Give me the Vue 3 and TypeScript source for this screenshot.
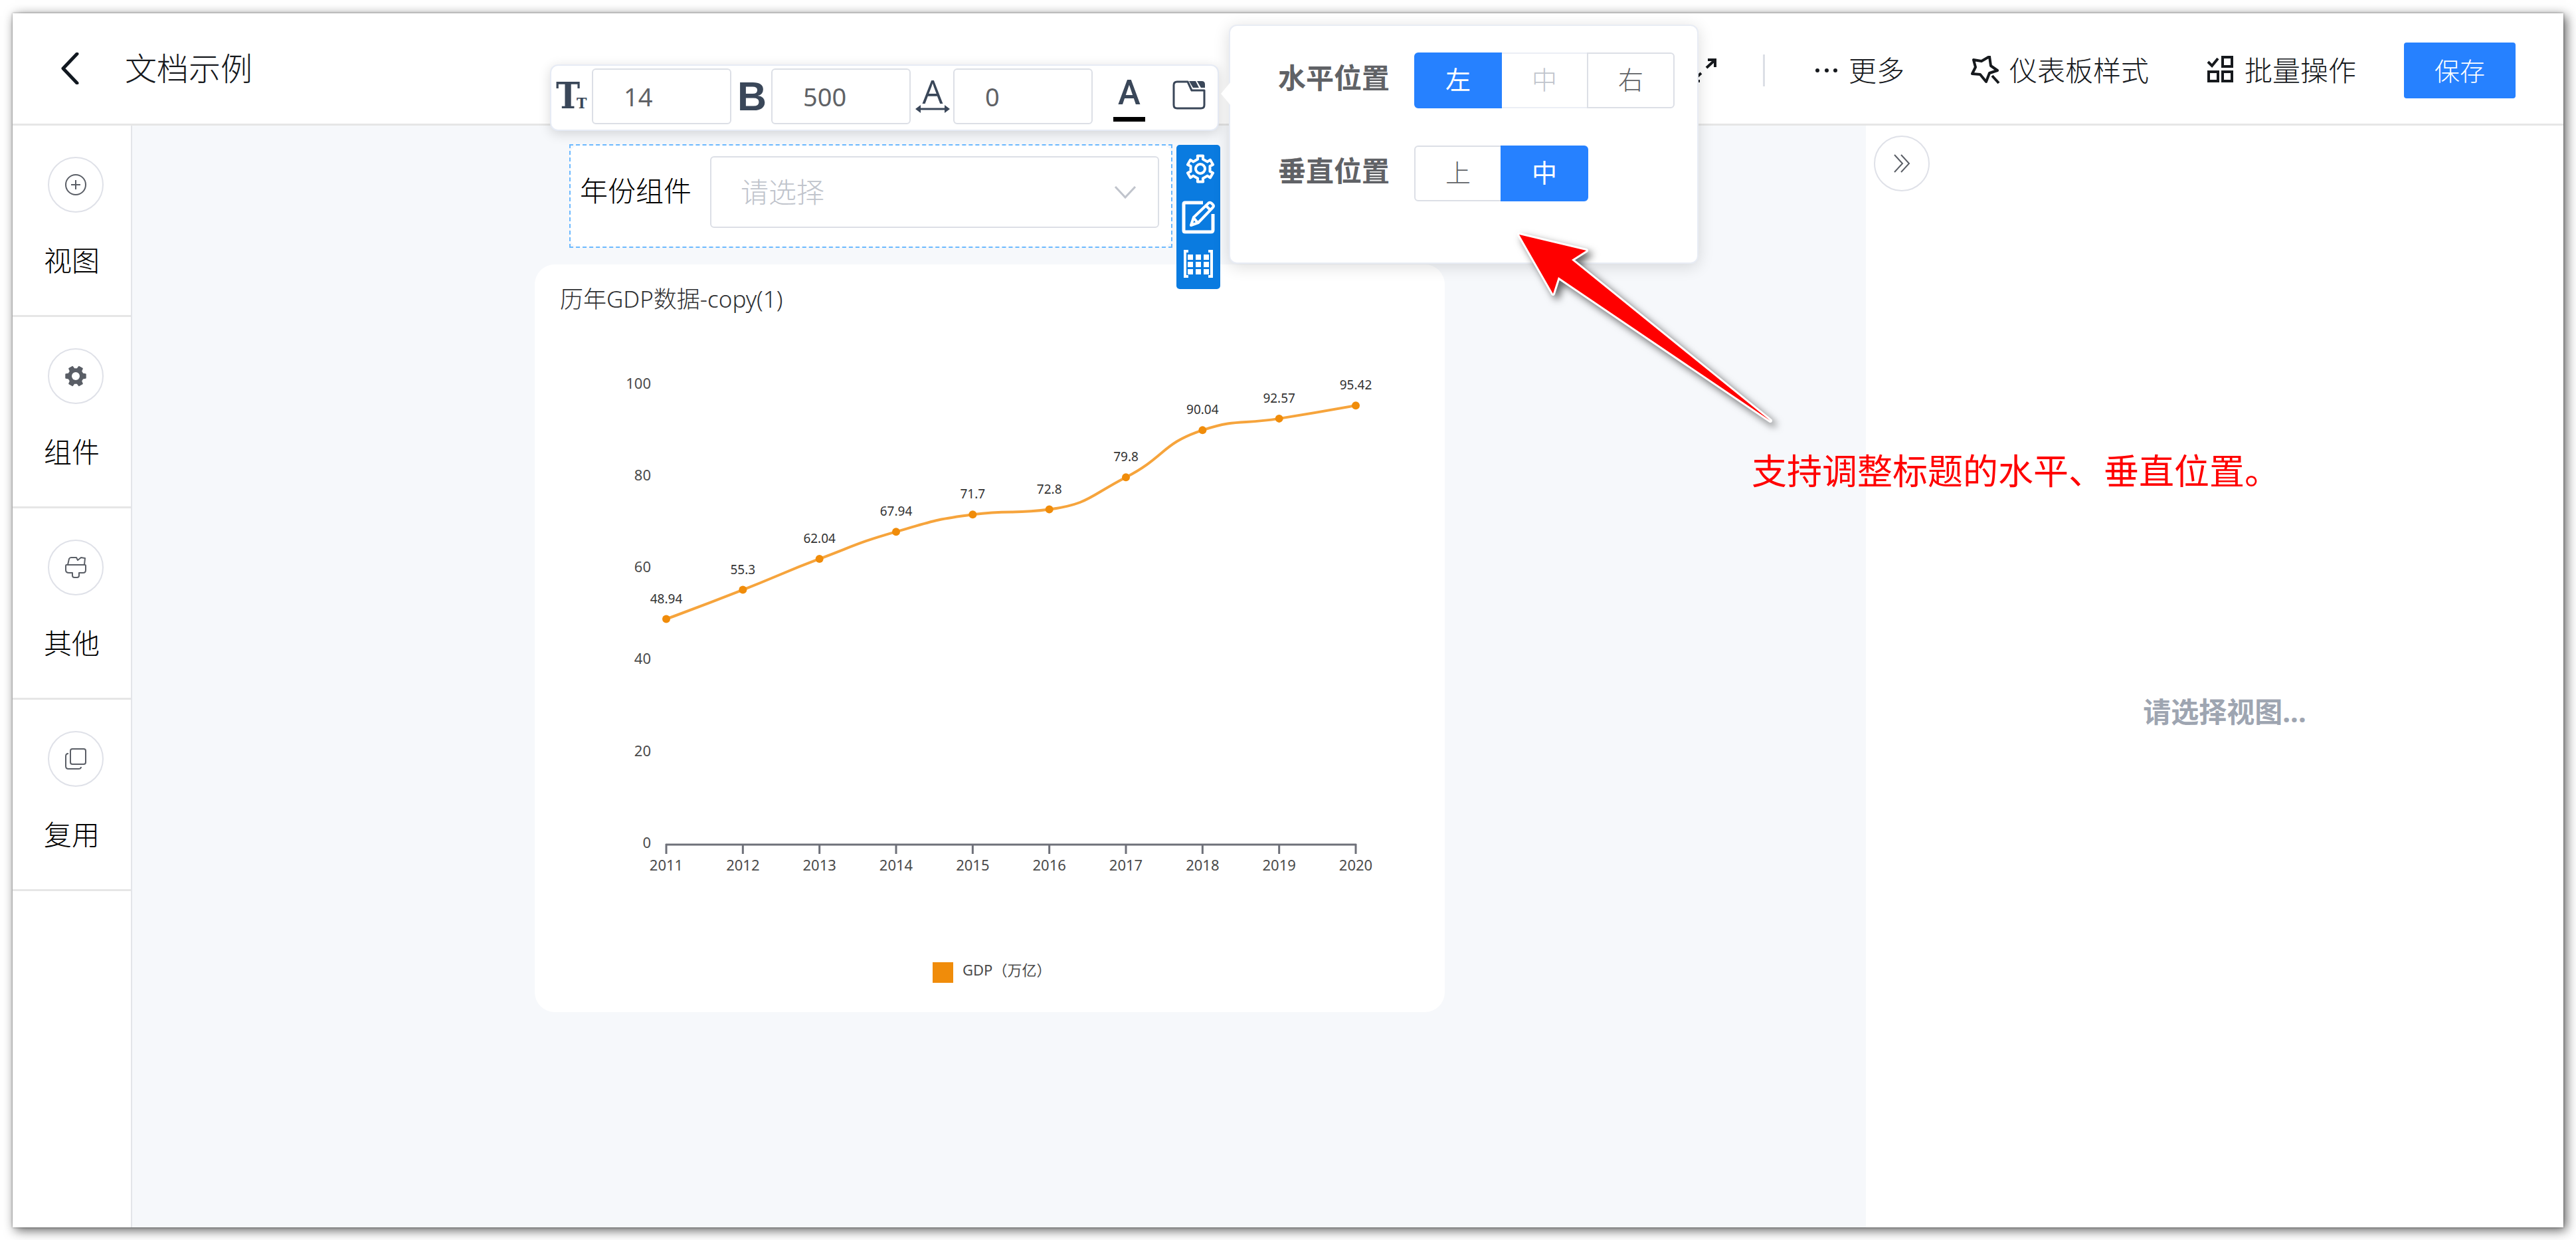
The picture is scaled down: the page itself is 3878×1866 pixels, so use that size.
<script setup lang="ts">
import { computed, ref } from 'vue'

interface Sample { year: number; value: number }
interface NavItem { key: string; label: string }
interface Choice { value: string; label: string; disabled?: boolean }

const navItems: NavItem[] = [
  { key: 'view', label: '视图' },
  { key: 'widget', label: '组件' },
  { key: 'other', label: '其他' },
  { key: 'reuse', label: '复用' },
]

const samples: Sample[] = [
  { year: 2011, value: 48.94 },
  { year: 2012, value: 55.3 },
  { year: 2013, value: 62.04 },
  { year: 2014, value: 67.94 },
  { year: 2015, value: 71.7 },
  { year: 2016, value: 72.8 },
  { year: 2017, value: 79.8 },
  { year: 2018, value: 90.04 },
  { year: 2019, value: 92.57 },
  { year: 2020, value: 95.42 },
]

const horizontalChoices: Choice[] = [
  { value: 'left', label: '左' },
  { value: 'center', label: '中', disabled: true },
  { value: 'right', label: '右' },
]
const verticalChoices: Choice[] = [
  { value: 'top', label: '上' },
  { value: 'center', label: '中' },
]

const fontSize = ref('14')
const fontWeight = ref('500')
const letterSpacing = ref('0')
const horizontal = ref('left')
const vertical = ref('center')
const year = ref('')

const plot = { left: 198, right: 1236, base: 872, unit: 6.915 }
const yTicks = [0, 20, 40, 60, 80, 100]
const yOf = (value: number) => plot.base - value * plot.unit

const points = computed(() =>
  samples.map((s, i) => ({
    ...s,
    x: plot.left + (i * (plot.right - plot.left)) / (samples.length - 1),
    y: yOf(s.value),
  })),
)

const clamp = (v: number, a: number, b: number) => Math.max(Math.min(v, Math.max(a, b)), Math.min(a, b))

// Smooth curve whose control points stay within the neighbouring samples.
const curve = computed(() => {
  const p = points.value
  let d = `M${p[0].x} ${p[0].y}`
  let outX = p[0].x
  let outY = p[0].y
  for (let i = 1; i < p.length; i++) {
    const prev = p[i - 1]
    const cur = p[i]
    const next = p[i + 1]
    let inX = cur.x
    let inY = cur.y
    let nextX = cur.x
    let nextY = cur.y
    if (next) {
      const lenPrev = Math.hypot(cur.x - prev.x, cur.y - prev.y)
      const lenNext = Math.hypot(next.x - cur.x, next.y - cur.y)
      const ratio = lenNext / (lenNext + lenPrev)
      nextX = clamp(cur.x + (next.x - prev.x) * 0.5 * ratio, cur.x, next.x)
      nextY = clamp(cur.y + (next.y - prev.y) * 0.5 * ratio, cur.y, next.y)
      inX = clamp(cur.x - ((nextX - cur.x) * lenPrev) / lenNext, prev.x, cur.x)
      inY = clamp(cur.y - ((nextY - cur.y) * lenPrev) / lenNext, prev.y, cur.y)
      nextX = cur.x + ((cur.x - inX) * lenNext) / lenPrev
      nextY = cur.y + ((cur.y - inY) * lenNext) / lenPrev
    }
    d += `C${outX} ${outY} ${inX} ${inY} ${cur.x} ${cur.y}`
    outX = nextX
    outY = nextY
  }
  return d
})

function gearPath(c: number, outer: number, inner: number, start: number, half: number, foot: number): string {
  const pts: string[] = []
  for (let i = 0; i < 6; i++) {
    const mid = start + i * 60
    const corners: [number, number][] = [[-foot, inner], [-half, outer], [half, outer], [foot, inner]]
    for (const [offset, r] of corners) {
      const a = ((mid + offset) * Math.PI) / 180
      pts.push(`${(c + r * Math.cos(a)).toFixed(2)} ${(c + r * Math.sin(a)).toFixed(2)}`)
    }
  }
  return `M${pts.join('L')}Z`
}
const solidGear = gearPath(16, 15, 11, 0, 11, 18)
const outlineGear = gearPath(24, 20, 15, 30, 12, 15)
</script>

<template>
  <div class="shell">
    <header class="topbar">
      <button class="plain back" type="button" aria-label="返回">
        <svg width="28" height="48" viewBox="0 0 28 48"><path d="M25 2 4 24 25 46" fill="none" stroke="#111820" stroke-width="5" stroke-linecap="round" stroke-linejoin="round" /></svg>
      </button>
      <h1 class="doc-title">文档示例</h1>
      <div class="actions">
        <button class="plain" type="button" aria-label="全屏">
          <svg width="38" height="38" viewBox="0 0 38 38" fill="none" stroke="#16191d" stroke-width="4"><path d="M25 3H36V14M35 4 23 15M13 35H2V24M3 34 15 23" /></svg>
        </button>
        <span class="divider"></span>
        <button class="plain action" type="button">
          <svg width="44" height="44" viewBox="0 0 44 44" fill="#16191d"><circle cx="11" cy="22" r="3" /><circle cx="25" cy="22" r="3" /><circle cx="38" cy="22" r="3" /></svg>
          更多
        </button>
        <button class="plain action style-action" type="button">
          <svg width="44" height="44" viewBox="0 0 44 44" fill="none" stroke="#16191d" stroke-width="4" stroke-linejoin="round"><path d="M4 6 16 8 28 1 30 15 40 22 28 26 23 39 14 28 2 27 7 17Z" /><path d="M32 30 42 41" /></svg>
          仪表板样式
        </button>
        <button class="plain action batch-action" type="button">
          <svg width="44" height="44" viewBox="0 0 44 44" fill="none" stroke="#16191d" stroke-width="4"><path d="M3 9 9 15 18 4" /><rect x="25" y="2" width="14" height="14" /><rect x="4" y="24" width="14" height="14" /><rect x="25" y="24" width="14" height="14" /></svg>
          批量操作
        </button>
        <button class="save" type="button">保存</button>
      </div>
    </header>

    <div class="workspace">
      <nav class="side">
        <button v-for="item in navItems" :key="item.key" class="plain side-item" type="button">
          <span class="ring">
            <svg v-if="item.key === 'view'" width="32" height="32" viewBox="0 0 32 32" fill="none" stroke="#5a5e66" stroke-width="2"><circle cx="16" cy="16" r="15" /><path d="M16 9V23M9 16H23" /></svg>
            <svg v-else-if="item.key === 'widget'" width="32" height="32" viewBox="0 0 32 32"><path :d="solidGear" fill="#5a5e66" stroke="#5a5e66" stroke-width="2" stroke-linejoin="round" /><circle cx="16" cy="16" r="6" fill="#fff" /></svg>
            <svg v-else-if="item.key === 'other'" width="32" height="32" viewBox="0 0 32 32" fill="none" stroke="#5a5e66" stroke-width="2" stroke-linejoin="round"><path d="M4 12 6 3Q7 1 9 1H17L19 5 24 1 30 2 29 12M2 12H30Q31 12 31 14V20Q31 24 27 24H21V28Q21 31 18 31H14Q11 31 11 28V24H6Q1 24 1 20V14Q1 12 2 12Z" /></svg>
            <svg v-else width="32" height="32" viewBox="0 0 32 32" fill="none" stroke="#5a5e66" stroke-width="2"><rect x="8" y="1" width="23" height="23" rx="3" /><path d="M5 8Q1 8 1 12V27Q1 31 5 31H20Q24 31 24 28" /></svg>
          </span>
          <span>{{ item.label }}</span>
        </button>
      </nav>

      <main class="board">
        <section class="filter">
          <div class="filter-body">
            <label for="year-select">年份组件</label>
            <div class="select-wrap">
              <select id="year-select" v-model="year">
                <option value="">请选择</option>
                <option v-for="s in samples" :key="s.year" :value="String(s.year)">{{ s.year }}</option>
              </select>
              <svg class="caret" width="34" height="22" viewBox="0 0 34 22"><path d="M2 2 17 18 32 2" fill="none" stroke="#c0c4cc" stroke-width="3" /></svg>
            </div>
          </div>

          <div class="format-bar">
            <label for="font-size" aria-label="字号">
              <svg width="50" height="64" viewBox="0 -7 50 64" fill="#3a4759"><text class="slab" x="0" y="43" font-size="54">T</text><text class="slab" x="31" y="43" font-size="23">T</text></svg>
            </label>
            <input id="font-size" v-model="fontSize" type="text" />
            <label for="font-weight" aria-label="字重">
              <svg width="50" height="72" viewBox="0 -11 50 72" fill="#3a4759"><text class="grotesk" x="3" y="46" font-size="61" font-weight="700">B</text></svg>
            </label>
            <input id="font-weight" v-model="fontWeight" type="text" />
            <label for="letter-spacing" aria-label="字间距">
              <svg width="54" height="88" viewBox="0 -19 54 88" fill="#3a4759"><text class="humanist" x="27" y="36" font-size="49" text-anchor="middle">A</text><path d="M1 44 9 38V50ZM53 44 45 38V50Z" /><path d="M6 44H48" stroke="#3a4759" stroke-width="3" /></svg>
            </label>
            <input id="letter-spacing" v-model="letterSpacing" type="text" />
            <button class="plain color" type="button" aria-label="字体颜色">
              <svg width="50" height="78" viewBox="0 -12 50 78" fill="#3a4759"><text class="geometric" x="25" y="39" font-size="51" font-weight="500" text-anchor="middle">A</text><rect x="1" y="58" width="48" height="7" fill="#000" /></svg>
            </button>
            <button class="plain place" type="button" aria-label="标题位置">
              <svg width="50" height="48" viewBox="0 0 50 48"><path d="M23 2H7Q2 2 2 7V37Q2 42 7 42H43Q48 42 48 37V15H29Z" fill="none" stroke="#3a4759" stroke-width="3" stroke-linejoin="round" /><path d="M25 1H35L40 11H31ZM37 1H44Q49 1 49 6V11H43Z" fill="#3a4759" /></svg>
            </button>

            <div class="popover">
              <svg class="pointer" width="16" height="36" viewBox="0 0 16 36"><path d="M16 0 1 18 16 36Z" fill="#fff" /></svg>
              <fieldset class="choice-row">
                <legend>水平位置</legend>
                <div class="segments">
                  <label v-for="c in horizontalChoices" :key="c.value" class="segment" :class="{ on: horizontal === c.value, off: c.disabled }">
                    <input v-model="horizontal" type="radio" name="horizontal" :value="c.value" :disabled="c.disabled" />{{ c.label }}
                  </label>
                </div>
              </fieldset>
              <fieldset class="choice-row">
                <legend>垂直位置</legend>
                <div class="segments">
                  <label v-for="c in verticalChoices" :key="c.value" class="segment" :class="{ on: vertical === c.value }">
                    <input v-model="vertical" type="radio" name="vertical" :value="c.value" />{{ c.label }}
                  </label>
                </div>
              </fieldset>
            </div>
          </div>

          <div class="tool-strip">
            <button class="plain" type="button" aria-label="设置">
              <svg width="50" height="48" viewBox="-4 0 50 48" fill="none" stroke="#fff" stroke-width="4" stroke-linejoin="round"><path :d="outlineGear" /><circle cx="24" cy="24" r="7" /></svg>
            </button>
            <button class="plain" type="button" aria-label="编辑">
              <svg width="50" height="50" viewBox="0 0 50 50" fill="none" stroke="#fff"><path d="M32 3H5Q3 3 3 5V45Q3 47 5 47H44Q47 47 47 44V20" stroke-width="5" /><path d="M14 37 18 25 41 3Q43 2 45 4L47 6Q49 8 47 10L25 33ZM37 8 43 14M18 26 24 33" stroke-width="4" stroke-linejoin="round" /></svg>
            </button>
            <button class="plain" type="button" aria-label="网格">
              <svg width="46" height="42" viewBox="0 0 46 42" fill="#fff"><path d="M8 2H3V40H8M38 2H43V40H38" fill="none" stroke="#fff" stroke-width="4" /><path d="M7 7H15V15H7ZM19 7H27V15H19ZM31 7H39V15H31ZM7 18H15V26H7ZM19 18H27V26H19ZM31 18H39V26H31ZM7 29H15V37H7ZM19 29H27V37H19ZM31 29H39V37H31Z" /></svg>
            </button>
          </div>
        </section>

        <section class="chart-card">
          <h2 class="chart-title">历年GDP数据-copy(1)</h2>
          <svg class="chart" viewBox="0 90 1370 1035" role="img" aria-label="历年GDP数据">
            <g class="tick-text">
              <text v-for="t in yTicks" :key="t" x="175" :y="yOf(t) + 6" text-anchor="end">{{ t }}</text>
            </g>
            <g stroke="#6e7079" stroke-width="3">
              <line :x1="plot.left - 1" :x2="plot.right + 1" :y1="plot.base + 1" :y2="plot.base + 1" />
              <line v-for="p in points" :key="p.year" :x1="p.x" :x2="p.x" :y1="plot.base" :y2="plot.base + 15" />
            </g>
            <g class="tick-text">
              <text v-for="p in points" :key="p.year" :x="p.x" :y="plot.base + 40" text-anchor="middle">{{ p.year }}</text>
            </g>
            <path :d="curve" fill="none" stroke="#f6a43c" stroke-width="4" />
            <g fill="#f08c0a">
              <circle v-for="p in points" :key="p.year" :cx="p.x" :cy="p.y" r="6" />
            </g>
            <g class="value-text">
              <text v-for="p in points" :key="p.year" :x="p.x" :y="p.y - 24" text-anchor="middle">{{ p.value }}</text>
            </g>
            <rect x="599" y="1050" width="31" height="31" fill="#f08c0a" />
            <text class="tick-text" x="644" y="1070">GDP（万亿）</text>
          </svg>
        </section>
      </main>

      <aside class="panel">
        <button class="plain ring collapse" type="button" aria-label="收起">
          <svg width="26" height="28" viewBox="0 0 26 28" fill="none" stroke="#5a5e66" stroke-width="2"><path d="M2 1 14 14 2 27M12 1 24 14 12 27" /></svg>
        </button>
        <p class="empty">请选择视图...</p>
      </aside>

      <div class="note">
        <svg width="420" height="320" viewBox="0 0 420 320"><path class="arrow" d="M10 10 111 34 89 48 388 290 69 74 61 99Z" /></svg>
        <p>支持调整标题的水平、垂直位置。</p>
      </div>
    </div>
  </div>
</template>

<style>
body {
  background: #fff;
}
</style>

<style scoped>
.shell,
.shell * {
  box-sizing: border-box;
}
.shell {
  display: flex;
  flex-direction: column;
  min-height: calc(100vh - 39px);
  margin: 20px 19px 19px;
  background: #fff;
  box-shadow: 4px 4px 16px rgba(0, 0, 0, 0.65), 0 0 3px rgba(0, 0, 0, 0.4);
  font-family: "Noto Sans", "Noto Sans CJK SC", sans-serif;
  font-size: 42px;
  line-height: 60px;
  color: #000;
}
.plain {
  padding: 0;
  border: 0;
  background: none;
  font: inherit;
  color: inherit;
}
svg {
  display: block;
}
h1,
h2,
p {
  margin: 0;
}

.topbar {
  display: flex;
  align-items: center;
  height: 169px;
  padding: 0 72px;
  border-bottom: 3px solid #e6e6e6;
}
.doc-title {
  margin-left: 69px;
  font-size: 48px;
  font-weight: 300;
  color: #16191d;
}
.actions {
  display: flex;
  align-items: center;
  gap: 70px;
  margin-left: auto;
  padding-top: 6px;
  font-weight: 300;
  color: #16191d;
}
.divider {
  width: 3px;
  height: 48px;
  margin-right: -2px;
  background: #dcdfe6;
}
.action {
  display: flex;
  align-items: center;
  gap: 14px;
}
.batch-action {
  padding: 0 2px 0 16px;
}
.style-action {
  padding-left: 30px;
}
.save {
  width: 168px;
  height: 84px;
  padding: 0;
  border: 0;
  border-radius: 4px;
  background: #2681ff;
  color: #fff;
  font: inherit;
  font-size: 38px;
}

.workspace {
  position: relative;
  display: flex;
  flex: 1;
}
.side {
  flex: none;
  width: 180px;
  border-right: 2px solid #e3e5e9;
}
.side-item {
  display: flex;
  flex-direction: column;
  align-items: flex-start;
  gap: 42px;
  width: 100%;
  height: 288px;
  padding: 47px 0 0 47px;
  border-bottom: 3px solid #e6e6e6;
  font-weight: 300;
}
.ring {
  display: flex;
  align-items: center;
  justify-content: center;
  width: 84px;
  height: 84px;
  border: 2px solid #dfe1e8;
  border-radius: 50%;
}
.side-item .ring {
  margin-left: 6px;
}

.board {
  flex: 1;
  padding: 28px 0 0 606px;
  background: #f6f8fb;
}
.filter {
  position: relative;
  width: 908px;
  height: 156px;
  margin-left: 52px;
  border: 2px dashed #6cb9ff;
}
.filter-body {
  display: flex;
  align-items: flex-start;
  gap: 28px;
  height: 100%;
  padding: 16px 18px 0 14px;
  border-radius: 12px;
  background: #fff;
  font-weight: 300;
}
.filter-body label {
  margin-top: 22px;
}
.select-wrap {
  position: relative;
  flex: 1;
}
.select-wrap select {
  width: 100%;
  height: 108px;
  padding: 0 44px;
  border: 2px solid #dcdfe6;
  border-radius: 6px;
  background: #fff;
  appearance: none;
  font: inherit;
  color: #c0c4cc;
}
.caret {
  position: absolute;
  top: 44px;
  right: 34px;
}

.format-bar {
  position: absolute;
  z-index: 2;
  top: -122px;
  left: -31px;
  display: flex;
  align-items: center;
  width: 1007px;
  height: 100px;
  padding: 0 18px 4px 7px;
  border: 2px solid #e6ebf5;
  border-radius: 12px;
  background: #fff;
  box-shadow: 0 4px 18px rgba(0, 0, 0, 0.15);
}
.format-bar > input {
  width: 210px;
  height: 84px;
  margin: 0 6px 0 4px;
  padding: 0 46px;
  border: 2px solid #dcdfe6;
  border-radius: 6px;
  font: inherit;
  font-size: 38px;
  color: #606266;
}
.slab {
  font-family: "DejaVu Serif Condensed", "DejaVu Serif", serif;
  font-weight: 700;
}
.grotesk {
  font-family: "Liberation Sans", sans-serif;
}
.humanist {
  font-family: "Open Sans", sans-serif;
}
.geometric {
  font-family: Roboto, sans-serif;
}
.color {
  margin-left: 24px;
}
.place {
  margin-left: auto;
}

.popover {
  position: absolute;
  top: -62px;
  left: 1020px;
  display: flex;
  flex-direction: column;
  gap: 56px;
  width: 707px;
  height: 360px;
  padding: 40px 0 0 72px;
  border: 2px solid #e8ecf4;
  border-radius: 12px;
  background: #fff;
  box-shadow: 0 4px 24px rgba(0, 0, 0, 0.14);
}
.pointer {
  position: absolute;
  top: 84px;
  left: -15px;
}
.choice-row {
  display: flex;
  align-items: flex-start;
  gap: 37px;
  margin: 0;
  padding: 0;
  border: 0;
}
.choice-row legend {
  float: left;
  padding: 0;
  line-height: 76px;
  font-weight: 700;
  color: #606266;
}
.segments {
  display: flex;
  font-size: 38px;
  font-weight: 300;
  color: #606266;
}
.segment {
  display: flex;
  align-items: center;
  justify-content: center;
  width: 132px;
  height: 84px;
  margin-left: -2px;
  padding-bottom: 4px;
  border: 2px solid #dcdfe6;
}
.segment:first-child {
  margin-left: 0;
  border-radius: 6px 0 0 6px;
}
.segment:last-child {
  border-radius: 0 6px 6px 0;
}
.segment input {
  position: absolute;
  opacity: 0;
}
.segment.off {
  border-color: #ebeef5;
  color: #c0c4cc;
}
.segment.on {
  z-index: 1;
  border-color: #2681ff;
  background: #2681ff;
  color: #fff;
  font-weight: 400;
}

.tool-strip {
  position: absolute;
  z-index: 1;
  top: -1px;
  left: 912px;
  display: flex;
  flex-direction: column;
  align-items: center;
  gap: 24px;
  width: 66px;
  height: 217px;
  padding-top: 12px;
  border-radius: 5px;
  background: #0a7be0;
}

.chart-card {
  width: 1370px;
  margin-top: 25px;
  border-radius: 30px;
  background: #fff;
}
.chart-title {
  height: 90px;
  padding: 22px 38px 0;
  font-size: 35px;
  font-weight: 300;
  color: #303133;
}
.chart {
  width: 100%;
}
.tick-text {
  font-size: 22px;
  fill: #4a4a4a;
}
.value-text {
  font-size: 19px;
  fill: #333;
}

.panel {
  flex: none;
  width: 1050px;
  background: #fff;
}
.collapse {
  margin: 15px 0 0 12px;
}
.empty {
  margin: 753px 0 0 30px;
  text-align: center;
  font-weight: 700;
  color: #9ea5b1;
}

.note {
  position: absolute;
  z-index: 3;
  top: 154px;
  left: 2258px;
  color: #f00;
  font-size: 53px;
}
.note svg {
  filter: drop-shadow(6px 6px 6px rgba(0, 0, 0, 0.6));
}
.note p {
  margin: 10px 0 0 360px;
  line-height: 72px;
}
.arrow {
  fill: #f00;
  stroke: #fff;
  stroke-width: 6;
  stroke-linejoin: round;
  paint-order: stroke;
}
</style>
